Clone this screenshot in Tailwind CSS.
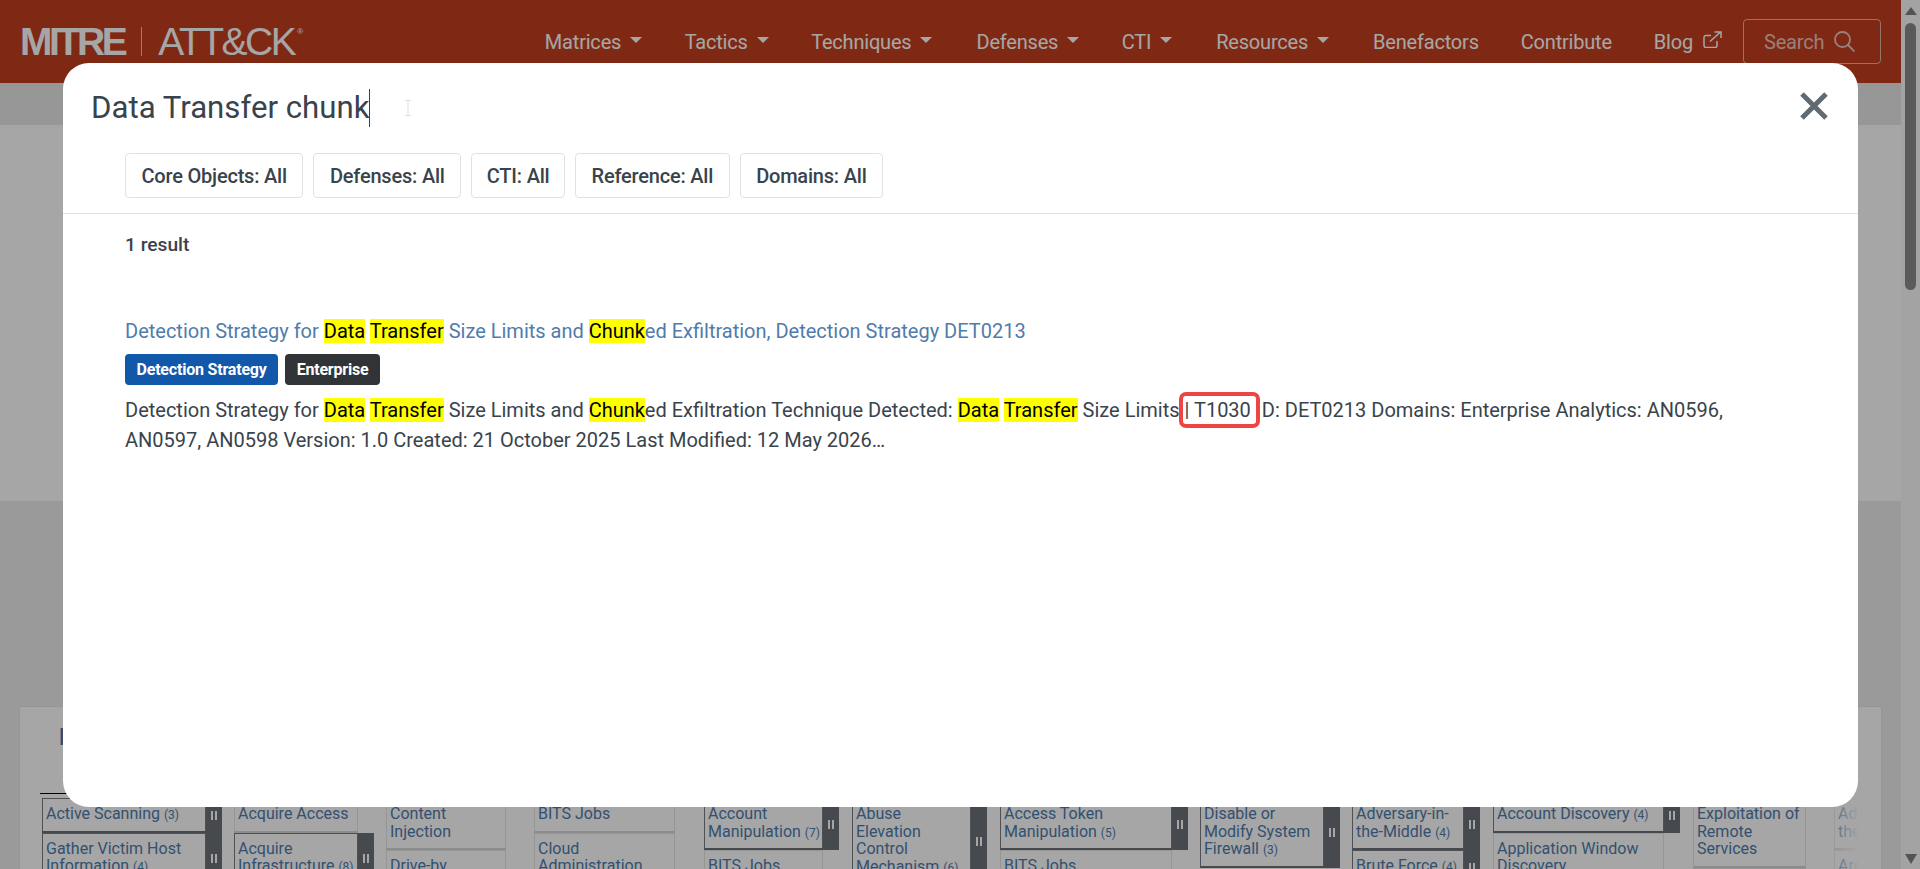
<!doctype html>
<html lang="en"><head><meta charset="utf-8"><title>MITRE ATT&amp;CK</title>
<script src="https://cdn.jsdelivr.net/npm/@tailwindcss/browser@4"></script></head>
<body class="h-[869px] overflow-hidden bg-white font-['Roboto',sans-serif]">
<div class="relative flex h-[869px] w-full">
  <div class="flex h-[869px] w-[1901px] flex-col overflow-hidden">
    <header class="flex h-[83px] shrink-0 items-start justify-between bg-[#c43f20] pl-5 pr-5 pt-[19px]">
      <div class="mt-[2px] flex h-[40px] items-center font-['Liberation_Sans',sans-serif] text-[39px] leading-none text-white">
        <span class="font-bold tracking-[-3.4px]">MITRE</span>
        <span class="ml-[17px] mr-[16px] h-[29px] w-px bg-white/70"></span>
        <span class="tracking-[-2.5px]">ATT&amp;CK</span><span class="mb-[18px] ml-[3px] text-[8px]">®</span>
      </div>
      <nav class="flex h-[45px] items-center text-[20px] tracking-[-0.2px] text-white">
        <span class="flex items-center">Matrices<i class="mb-[3px] ml-[9px] mr-[42.5px] h-0 w-0 border-x-[6px] border-t-[6px] border-x-transparent border-t-white"></i></span>
        <span class="flex items-center">Tactics<i class="mb-[3px] ml-[9px] mr-[42.5px] h-0 w-0 border-x-[6px] border-t-[6px] border-x-transparent border-t-white"></i></span>
        <span class="flex items-center">Techniques<i class="mb-[3px] ml-[9px] mr-[44px] h-0 w-0 border-x-[6px] border-t-[6px] border-x-transparent border-t-white"></i></span>
        <span class="flex items-center">Defenses<i class="mb-[3px] ml-[9px] mr-[42.5px] h-0 w-0 border-x-[6px] border-t-[6px] border-x-transparent border-t-white"></i></span>
        <span class="flex items-center">CTI<i class="mb-[3px] ml-[9px] mr-[44px] h-0 w-0 border-x-[6px] border-t-[6px] border-x-transparent border-t-white"></i></span>
        <span class="flex items-center">Resources<i class="mb-[3px] ml-[9px] mr-[44px] h-0 w-0 border-x-[6px] border-t-[6px] border-x-transparent border-t-white"></i></span>
        <span class="mr-[42px]">Benefactors</span>
        <span class="mr-[42px]">Contribute</span>
        <span class="flex items-center">Blog
          <svg class="mb-[5px] ml-[10px] mr-[21px] h-[17px] w-[19px]" viewBox="0 0 19 17" fill="none" stroke="currentColor" stroke-width="1.5"><path d="M14 10v4.500a2 2 0 0 1-2 2H3a2 2 0 0 1-2-2V6.500a2 2 0 0 1 2-2h5"/><path d="M7 10.500 17.500 1M11.500 1h6.500v6"/></svg>
        </span>
        <span class="flex h-[45px] w-[138px] items-center gap-[10px] rounded-[4px] border border-white/60 pl-[20px] text-white/70">Search
          <svg class="h-[21px] w-[21px]" viewBox="0 0 21 21" fill="none" stroke="currentColor" stroke-width="1.800"><circle cx="8.500" cy="8.500" r="7.500"/><path d="m14 14 6.500 6.500"/></svg>
        </span>
      </nav>
    </header>
    <div class="h-[42px] shrink-0 bg-[#e8e8e8]"></div>
    <div class="h-[376px] shrink-0 bg-white"></div>
    <main class="min-h-0 flex-1 bg-[#ededed] pl-[19px] pr-[19px] pt-[205px]">
      <div class="relative h-[400px] border border-[#e5e5e5] bg-white pl-[20px]">
        <div class="h-[86px] pl-[19px] pt-[16px] text-[24px] font-bold leading-[28px] text-[#4f7cac]">Enterprise</div>
        <div class="mr-[24px] border-t border-black"></div>
        <div class="mr-[23px] flex items-start overflow-hidden pl-[2px] pt-[4px] text-[16px] leading-[17.5px] text-[#4f7cac]">

          <div class="w-[192px] shrink-0 pr-[12px]">
            <div class="flex"><p class="min-w-0 flex-1 border border-b-2 border-[#777d84] border-b-[#6c7177] px-[3px] pb-[8px] pt-[6px]">Active Scanning <small class="text-[12px] leading-none">(3)</small></p><b class="flex w-[16px] items-center justify-center gap-[2px] bg-[#6c7177]"><i class="h-[9px] w-[2px] bg-white"></i><i class="h-[9px] w-[2px] bg-white"></i></b></div>
            <div class="flex"><p class="min-w-0 flex-1 border border-b-2 border-[#777d84] border-b-[#6c7177] px-[3px] pb-[8px] pt-[6px]">Gather Victim Host<br>Information <small class="text-[12px] leading-none">(4)</small></p><b class="flex w-[16px] items-center justify-center gap-[2px] bg-[#6c7177]"><i class="h-[9px] w-[2px] bg-white"></i><i class="h-[9px] w-[2px] bg-white"></i></b></div>
          </div>

          <div class="w-[152px] shrink-0 pr-[12px]">
            <div class="mr-[16px]"><p class="border border-b-2 border-[#e5e5e5] border-b-[#d8d8d8] px-[3px] pb-[8px] pt-[6px]">Acquire Access</p></div>
            <div class="flex"><p class="min-w-0 flex-1 border border-b-2 border-[#777d84] border-b-[#6c7177] px-[3px] pb-[8px] pt-[6px]">Acquire<br>Infrastructure <small class="text-[12px] leading-none">(8)</small></p><b class="flex w-[16px] items-center justify-center gap-[2px] bg-[#6c7177]"><i class="h-[9px] w-[2px] bg-white"></i><i class="h-[9px] w-[2px] bg-white"></i></b></div>
          </div>

          <div class="w-[148px] shrink-0 pr-[28px]">
            <p class="border border-b-2 border-[#e5e5e5] border-b-[#d8d8d8] px-[3px] pb-[8px] pt-[6px]">Content<br>Injection</p>
            <p class="border border-b-2 border-[#e5e5e5] border-b-[#d8d8d8] px-[3px] pb-[8px] pt-[6px]">Drive-by<br>Compromise</p>
          </div>

          <div class="w-[170px] shrink-0 pr-[29px]">
            <p class="border border-b-2 border-[#e5e5e5] border-b-[#d8d8d8] px-[3px] pb-[8px] pt-[6px]">BITS Jobs</p>
            <p class="border border-b-2 border-[#e5e5e5] border-b-[#d8d8d8] px-[3px] pb-[8px] pt-[6px]">Cloud<br>Administration</p>
          </div>

          <div class="w-[148px] shrink-0 pr-[13px]">
            <div class="flex"><p class="min-w-0 flex-1 whitespace-nowrap border border-b-2 border-[#777d84] border-b-[#6c7177] px-[3px] pb-[8px] pt-[6px]">Account<br>Manipulation <small class="text-[12px] leading-none">(7)</small></p><b class="flex w-[16px] items-center justify-center gap-[2px] bg-[#6c7177]"><i class="h-[9px] w-[2px] bg-white"></i><i class="h-[9px] w-[2px] bg-white"></i></b></div>
            <div class="mr-[16px]"><p class="border border-b-2 border-[#e5e5e5] border-b-[#d8d8d8] px-[3px] pb-[8px] pt-[6px]">BITS Jobs</p></div>
          </div>

          <div class="w-[148px] shrink-0 pr-[13px]">
            <div class="flex"><p class="min-w-0 flex-1 border border-b-2 border-[#777d84] border-b-[#6c7177] px-[3px] pb-[8px] pt-[6px]">Abuse<br>Elevation<br>Control<br>Mechanism <small class="text-[12px] leading-none">(6)</small></p><b class="flex w-[16px] items-center justify-center gap-[2px] bg-[#6c7177]"><i class="h-[9px] w-[2px] bg-white"></i><i class="h-[9px] w-[2px] bg-white"></i></b></div>
          </div>

          <div class="w-[200px] shrink-0 pr-[12px]">
            <div class="flex"><p class="min-w-0 flex-1 border border-b-2 border-[#777d84] border-b-[#6c7177] px-[3px] pb-[8px] pt-[6px]">Access Token<br>Manipulation <small class="text-[12px] leading-none">(5)</small></p><b class="flex w-[16px] items-center justify-center gap-[2px] bg-[#6c7177]"><i class="h-[9px] w-[2px] bg-white"></i><i class="h-[9px] w-[2px] bg-white"></i></b></div>
            <div class="mr-[16px]"><p class="border border-b-2 border-[#e5e5e5] border-b-[#d8d8d8] px-[3px] pb-[8px] pt-[6px]">BITS Jobs</p></div>
          </div>

          <div class="w-[152px] shrink-0 pr-[12px]">
            <div class="flex"><p class="min-w-0 flex-1 border border-b-2 border-[#777d84] border-b-[#6c7177] px-[3px] pb-[8px] pt-[6px]">Disable or<br>Modify System<br>Firewall <small class="text-[12px] leading-none">(3)</small></p><b class="flex w-[16px] items-center justify-center gap-[2px] bg-[#6c7177]"><i class="h-[9px] w-[2px] bg-white"></i><i class="h-[9px] w-[2px] bg-white"></i></b></div>
          </div>

          <div class="w-[141px] shrink-0 pr-[13px]">
            <div class="flex"><p class="min-w-0 flex-1 border border-b-2 border-[#777d84] border-b-[#6c7177] px-[3px] pb-[8px] pt-[6px]">Adversary-in-<br>the-Middle <small class="text-[12px] leading-none">(4)</small></p><b class="flex w-[16px] items-center justify-center gap-[2px] bg-[#6c7177]"><i class="h-[9px] w-[2px] bg-white"></i><i class="h-[9px] w-[2px] bg-white"></i></b></div>
            <div class="flex"><p class="min-w-0 flex-1 border border-b-2 border-[#777d84] border-b-[#6c7177] px-[3px] pb-[8px] pt-[6px]">Brute Force <small class="text-[12px] leading-none">(4)</small></p><b class="flex w-[16px] items-center justify-center gap-[2px] bg-[#6c7177]"><i class="h-[9px] w-[2px] bg-white"></i><i class="h-[9px] w-[2px] bg-white"></i></b></div>
          </div>

          <div class="w-[200px] shrink-0 pr-[13px]">
            <div class="flex"><p class="min-w-0 flex-1 border border-b-2 border-[#777d84] border-b-[#6c7177] px-[3px] pb-[8px] pt-[6px]">Account Discovery <small class="text-[12px] leading-none">(4)</small></p><b class="flex w-[16px] items-center justify-center gap-[2px] bg-[#6c7177]"><i class="h-[9px] w-[2px] bg-white"></i><i class="h-[9px] w-[2px] bg-white"></i></b></div>
            <div class="mr-[16px]"><p class="border border-b-2 border-[#e5e5e5] border-b-[#d8d8d8] px-[3px] pb-[8px] pt-[6px]">Application Window<br>Discovery</p></div>
          </div>

          <div class="w-[141px] shrink-0 pr-[28px]">
            <p class="border border-b-2 border-[#e5e5e5] border-b-[#d8d8d8] px-[3px] pb-[8px] pt-[6px]">Exploitation of<br>Remote<br>Services</p>
            <p class="border border-b-2 border-[#e5e5e5] border-b-[#d8d8d8] px-[3px] pb-[8px] pt-[6px]">Internal</p>
          </div>

          <div class="w-[120px] shrink-0">
            <p class="whitespace-nowrap border border-b-2 border-[#e5e5e5] border-b-[#d8d8d8] px-[3px] pb-[8px] pt-[6px]">Adversary-in-<br>the-Middle</p>
            <p class="whitespace-nowrap border border-b-2 border-[#e5e5e5] border-b-[#d8d8d8] px-[3px] pb-[8px] pt-[6px]">Archive Collected</p>
          </div>
        </div>
        <div class="absolute bottom-0 right-0 top-[86px] w-[48px] bg-gradient-to-r from-white/30 from-0% to-white to-[55%]"></div>
      </div>
    </main>
  </div>
  <div class="flex h-[869px] w-[19px] shrink-0 flex-col items-center justify-between bg-[#fbfbfb] pb-[5px] pt-[7px]">
    <div class="flex flex-col items-center">
      <i class="h-0 w-0 border-x-[6.5px] border-b-[8px] border-x-transparent border-b-[#808080]"></i>
      <i class="mt-[8px] h-[267px] w-[11px] rounded-full bg-[#8b8b8b]"></i>
    </div>
    <i class="h-0 w-0 border-x-[6.5px] border-t-[10px] border-x-transparent border-t-[#808080]"></i>
  </div>
  <div class="absolute inset-0 bg-black/35"></div>
  <section class="absolute left-[63px] top-[63px] flex h-[744px] w-[1795px] flex-col overflow-hidden rounded-[26px] bg-white text-[#39434c]">
    <div class="flex h-[90px] shrink-0 items-start justify-between pl-[28px] pr-[30px] pt-[25px]">
      <div class="flex items-center text-[31.2px] leading-[38px]"><span class="pt-[1px]">Data Transfer chunk</span><span class="h-[38px] w-px bg-[#39434c]"></span>
        <svg class="ml-[35px] h-[16px] w-[6px]" viewBox="0 0 6 16" fill="none" stroke="#ddd"><path d="M0 .5h6M0 15.500h6M3 .5v15"/></svg></div>
      <svg class="mt-[4px] h-[28px] w-[28px]" viewBox="0 0 28 28" stroke="#5f6a72" stroke-width="5" fill="none"><path d="M2 2 26 26M26 2 2 26"/></svg>
    </div>
    <div class="flex h-[61px] shrink-0 items-start gap-[10px] border-b border-[#dee2e6] pl-[62px]">
      <span class="flex h-[45px] items-center rounded-[4px] border border-[#dee2e6] px-[15.5px] text-[20px] font-medium tracking-[-0.2px]">Core Objects: All</span>
      <span class="flex h-[45px] items-center rounded-[4px] border border-[#dee2e6] px-[15.5px] text-[20px] font-medium tracking-[-0.2px]">Defenses: All</span>
      <span class="flex h-[45px] items-center rounded-[4px] border border-[#dee2e6] px-[14.5px] text-[20px] font-medium tracking-[-0.2px]">CTI: All</span>
      <span class="flex h-[45px] items-center rounded-[4px] border border-[#dee2e6] px-[15.5px] text-[20px] font-medium tracking-[-0.2px]">Reference: All</span>
      <span class="flex h-[45px] items-center rounded-[4px] border border-[#dee2e6] px-[15.5px] text-[20px] font-medium tracking-[-0.2px]">Domains: All</span>
    </div>
    <div class="px-[62px] pt-[19px] text-[20px]">
      <p class="text-[19.2px] font-medium leading-[23px]">1 result</p>
      <p class="mt-[61px] leading-[29px] text-[#4f7cac]">Detection Strategy for <mark class="bg-[#ffff00] text-black">Data</mark> <mark class="bg-[#ffff00] text-black">Transfer</mark> Size Limits and <mark class="bg-[#ffff00] text-black">Chunk</mark>ed Exfiltration, Detection Strategy DET0213</p>
      <div class="mt-[8px] flex gap-[7px]">
        <span class="flex h-[31px] items-center rounded-[4px] bg-[#1158ab] px-[11.5px] text-[16px] font-bold tracking-[-0.2px] text-white">Detection Strategy</span>
        <span class="flex h-[31px] items-center rounded-[4px] bg-[#303437] px-[11.5px] text-[16px] font-bold tracking-[-0.2px] text-white">Enterprise</span>
      </div>
      <p class="mt-[10px] leading-[30px]">Detection Strategy for <mark class="bg-[#ffff00] text-black">Data</mark> <mark class="bg-[#ffff00] text-black">Transfer</mark> Size Limits and <mark class="bg-[#ffff00] text-black">Chunk</mark>ed Exfiltration Technique Detected: <mark class="bg-[#ffff00] text-black">Data</mark> <mark class="bg-[#ffff00] text-black">Transfer</mark> Size Limits <span class="mr-[3px] rounded-[1px] pr-[3px] outline-[4px] outline-offset-[2px] outline-[#ee4444]">| T1030</span> D: DET0213 Domains: Enterprise Analytics: AN0596, AN0597, AN0598 Version: 1.0 Created: 21 October 2025 Last Modified: 12 May 2026…</p>
    </div>
  </section>
</div>
</body></html>
